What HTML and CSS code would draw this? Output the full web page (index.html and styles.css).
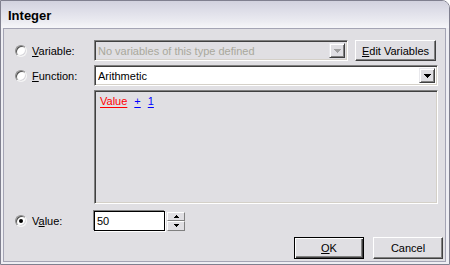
FILE: index.html
```html
<!DOCTYPE html>
<html>
<head>
<meta charset="utf-8">
<link rel="stylesheet" href="styles.css">
</head>
<body>
<div class="window">
  <div class="titlebar"><span class="title">Integer</span></div>
  <div class="client">
    <div class="row r1">
      <div class="opt"><span class="radio"></span><span class="lbl"><u>V</u>ariable:</span></div>
      <div class="combo disabled">
        <span class="ctext">No variables of this type defined</span>
        <span class="dd"><svg width="7" height="4" viewBox="0 0 7 4"><path class="arrow grey" d="M0 0h7v1h-7zM1 1h5v1h-5zM2 2h3v1h-3zM3 3h1v1h-1z"/></svg></span>
      </div>
      <div class="btn edit"><u>E</u>dit Variables</div>
    </div>
    <div class="row r2">
      <div class="opt"><span class="radio"></span><span class="lbl"><u>F</u>unction:</span></div>
      <div class="combo wide">
        <span class="ctext">Arithmetic</span>
        <span class="dd"><svg width="7" height="4" viewBox="0 0 7 4"><path class="arrow" d="M0 0h7v1h-7zM1 1h5v1h-5zM2 2h3v1h-3zM3 3h1v1h-1z"/></svg></span>
      </div>
    </div>
    <div class="row r3">
      <div class="opt"></div>
      <div class="exprbox">
        <span class="tok red">Value</span><span class="tok blue">+</span><span class="tok blue">1</span>
      </div>
    </div>
    <div class="row r4">
      <div class="opt"><span class="radio on"></span><span class="lbl">V<u>a</u>lue:</span></div>
      <div class="edit-num">50</div>
      <div class="spin">
        <span class="sb"><svg width="5" height="3" viewBox="0 0 5 3"><path class="arrow" d="M2 0h1v1h-1zM1 1h3v1h-3zM0 2h5v1h-5z"/></svg></span>
        <span class="sb"><svg width="5" height="3" viewBox="0 0 5 3"><path class="arrow" d="M0 0h5v1h-5zM1 1h3v1h-3zM2 2h1v1h-1z"/></svg></span>
      </div>
    </div>
    <div class="buttons">
      <div class="btn ok default"><u>O</u>K</div>
      <div class="btn cancel">Cancel</div>
    </div>
  </div>
</div>
</body>
</html>
```

FILE: styles.css
```css
* { box-sizing: border-box; }
html, body { margin: 0; padding: 0; background: #ffffff; }
body { font-family: "Liberation Sans", Arial, sans-serif; font-size: 11px; color: #000; }

.window {
  width: 450px;
  height: 265px;
  display: flex;
  flex-direction: column;
  border: 1px solid #80808f;
  border-radius: 0 8px 0 0;
  background: #eeeef3;
  overflow: hidden;
}
.titlebar {
  height: 27px;
  flex: none;
  background: linear-gradient(#d2d2de 0%, #dedee8 35%, #ebebf1 75%, #f6f6f9 100%);
  display: flex;
  align-items: center;
  padding: 2px 0 0 7px;
}
.title { font-weight: bold; font-size: 13px; color: #000; }

.client {
  flex: 1;
  margin: 0 3px 2px 2px;
  border: 1px solid #a4a4b4;
  background: #e0dfe3;
  padding-top: 11px;
  display: flex;
  flex-direction: column;
}
.row { display: flex; align-items: center; padding-right: 7px; }
.r1, .r2 { height: 21px; }
.r2 { margin-top: 4px; }
.r3 { margin-top: 4px; height: 114px; align-items: stretch; }
.r4 { margin-top: 7px; height: 20px; }

.opt {
  width: 90px;
  flex: none;
  padding-left: 11px;
  display: flex;
  align-items: center;
  gap: 5px;
}
.radio {
  width: 12px; height: 12px;
  border-radius: 50%;
  background: #fff;
  border: 1px solid;
  border-color: #8c8c8c #f4f4f4 #f4f4f4 #8c8c8c;
  box-shadow: inset 1px 1px 0 #505050, inset -1px -1px 0 #d8d7dc;
  position: relative;
  flex: none;
}
.radio.on::after {
  content: "";
  position: absolute;
  left: 3px; top: 3px;
  width: 4px; height: 4px;
  border-radius: 50%;
  background: #000;
}
.lbl { white-space: nowrap; }

.sunken {
  border: 1px solid;
}
.combo {
  height: 21px;
  display: flex;
  align-items: center;
  border: 1px solid;
  border-color: #808080 #fff #fff #808080;
  box-shadow: inset 1px 1px 0 #404040, inset -1px -1px 0 #d4d0c8;
  background: #fff;
  padding: 2px 2px 2px 3px;
}
.combo.disabled { width: 254px; background: #e0dfe3; color: #a9a89c; }
.combo.wide { flex: 1; }
.ctext { flex: 1; white-space: nowrap; overflow: hidden; padding-left: 0; }
.dd {
  width: 16px;
  height: 15px;
  flex: none;
  display: flex;
  align-items: center;
  justify-content: center;
  background: #e0dfe3;
  border: 1px solid;
  border-color: #e8e8ec #404040 #404040 #e8e8ec;
  box-shadow: inset 1px 1px 0 #fff, inset -1px -1px 0 #808080;
}
.arrow { fill: #000; }
.arrow.grey { fill: #a0a0a0; }

.btn {
  display: flex;
  align-items: center;
  justify-content: center;
  background: #e0dfe3;
  border: 1px solid;
  border-color: #fff #404040 #404040 #fff;
  box-shadow: inset -1px -1px 0 #808080;
  white-space: nowrap;
}
.btn.edit { width: 81px; height: 21px; margin-left: 7px; }

.exprbox {
  flex: 1;
  border: 1px solid;
  border-color: #808080 #fff #fff #808080;
  box-shadow: inset 1px 1px 0 #404040, inset -1px -1px 0 #d4d0c8;
  padding: 4px 5px;
  line-height: 13px;
}
.tok { text-decoration: underline; text-underline-offset: 2px; }
.tok + .tok { margin-left: 7px; }
.red { color: #ff0000; }
.blue { color: #0000ff; }

.edit-num {
  width: 71px;
  height: 20px;
  background: #fff;
  border: 1px solid #000;
  box-shadow: -1px -1px 0 #808080, 1px 1px 0 #fff;
  padding-left: 2px;
  display: flex;
  align-items: center;
}
.spin {
  margin-left: 2px;
  width: 18px;
  height: 19px;
  display: flex;
  flex-direction: column;
}
.sb {
  flex: 1;
  display: flex;
  align-items: center;
  justify-content: center;
  background: #e0dfe3;
  border: 1px solid;
  border-color: #fff #808080 #808080 #fff;
}

.buttons {
  margin-top: 6px;
  display: flex;
  justify-content: flex-end;
  gap: 9px;
  padding-right: 2px;
}
.btn.ok, .btn.cancel { width: 70px; height: 22px; }
.btn.default {
  border: 1px solid #000;
  box-shadow: inset 1px 1px 0 #fff, inset -1px -1px 0 #404040, inset -2px -2px 0 #808080;
}
```
